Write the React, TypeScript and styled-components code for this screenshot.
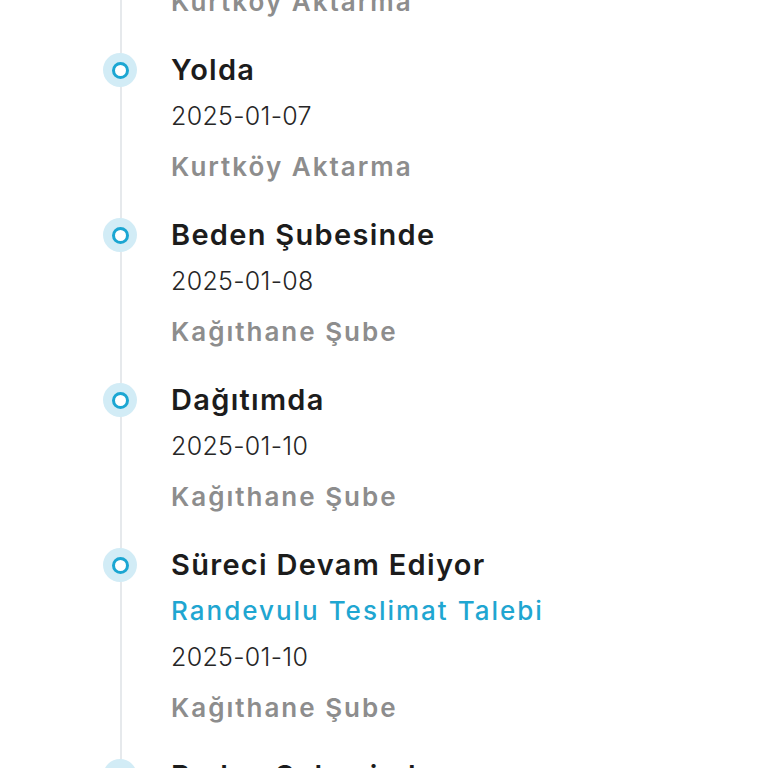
import React from "react";
import styled, { createGlobalStyle } from "styled-components";

type Step = {
  title: string;
  note?: string;
  date: string;
  place: string;
};

const steps: Step[] = [
  { title: "Transfer Merkezinde", date: "2025-01-06", place: "Kurtköy Aktarma" },
  { title: "Yolda", date: "2025-01-07", place: "Kurtköy Aktarma" },
  { title: "Beden Şubesinde", date: "2025-01-08", place: "Kağıthane Şube" },
  { title: "Dağıtımda", date: "2025-01-10", place: "Kağıthane Şube" },
  {
    title: "Süreci Devam Ediyor",
    note: "Randevulu Teslimat Talebi",
    date: "2025-01-10",
    place: "Kağıthane Şube",
  },
  { title: "Beden Şubesinde", date: "2025-01-10", place: "Kağıthane Şube" },
];

function App() {
  return (
    <>
      <GlobalStyle />
      <StPage>
        <StList>
          {steps.map((step, i) => (
            <StItem key={i}>
              <StRail>
                <StDot />
              </StRail>
              <StBody>
                <StTitle>{step.title}</StTitle>
                {step.note && <StNote>{step.note}</StNote>}
                <StDate>{step.date}</StDate>
                <StPlace>{step.place}</StPlace>
              </StBody>
            </StItem>
          ))}
        </StList>
      </StPage>
    </>
  );
}

export default App;

const GlobalStyle = createGlobalStyle`
  html, body {
    margin: 0;
    padding: 0;
    background: #ffffff;
    overflow: hidden;
  }
  body {
    font-family: Inter, "Noto Sans", sans-serif;
  }
`;

const StPage = styled.div`
  height: 768px;
  overflow: hidden;
  padding-left: 86px;
`;

const StList = styled.div`
  display: flex;
  flex-direction: column;
  margin-top: -113px;
`;

const StItem = styled.div`
  display: grid;
  grid-template-columns: 68px 1fr;
  column-gap: 17px;
`;

const StRail = styled.div`
  background: linear-gradient(
    to right,
    transparent 34px,
    #e6e9ec 34px,
    #e6e9ec 36px,
    transparent 36px
  );
  display: flex;
  justify-content: center;
  align-items: flex-start;
`;

const StDot = styled.div`
  margin-top: 1px;
  width: 34px;
  height: 34px;
  border-radius: 50%;
  background: #d2ecf6;
  display: flex;
  align-items: center;
  justify-content: center;
  &::after {
    content: "";
    width: 11px;
    height: 11px;
    border-radius: 50%;
    background: #ffffff;
    border: 3px solid #1ba6d2;
  }
`;

const StBody = styled.div`
  display: flex;
  flex-direction: column;
  padding-bottom: 32px;
  white-space: nowrap;
`;

const StTitle = styled.div`
  font-size: 29px;
  line-height: 36px;
  font-weight: 600;
  letter-spacing: 1.3px;
  color: #1c1c1c;
`;

const StNote = styled.div`
  margin-top: 10px;
  font-size: 26px;
  line-height: 36px;
  font-weight: 500;
  letter-spacing: 2px;
  color: #1fa6d1;
`;

const StDate = styled.div`
  margin-top: 10px;
  font-size: 25px;
  line-height: 36px;
  font-weight: 300;
  letter-spacing: 0.3px;
  color: #262626;
`;

const StPlace = styled.div`
  margin-top: 15px;
  font-size: 26px;
  line-height: 36px;
  font-weight: 600;
  letter-spacing: 2px;
  color: #8d8d8d;
`;
